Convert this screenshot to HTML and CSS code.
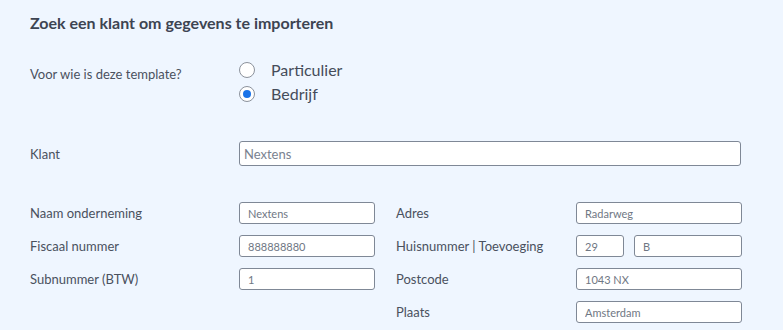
FILE: index.html
```html
<!DOCTYPE html>
<html lang="nl">
<head>
<meta charset="utf-8">
<title>Zoek een klant</title>
<link rel="stylesheet" href="styles.css">
</head>
<body>
<main class="page">
  <h1 class="title">Zoek een klant om gegevens te importeren</h1>

  <section class="row-type">
    <div class="label">Voor wie is deze template?</div>
    <div class="radios">
      <label class="radio"><input type="radio" name="type"><span>Particulier</span></label>
      <label class="radio"><input type="radio" name="type" checked><span>Bedrijf</span></label>
    </div>
  </section>

  <section class="row-klant">
    <div class="label">Klant</div>
    <input class="field field-lg" type="text" value="Nextens">
  </section>

  <section class="details">
    <div class="label">Naam onderneming</div>
    <input class="field" type="text" value="Nextens">
    <div class="label">Adres</div>
    <input class="field" type="text" value="Radarweg">

    <div class="label">Fiscaal nummer</div>
    <input class="field" type="text" value="888888880">
    <div class="label">Huisnummer | Toevoeging</div>
    <div class="pair">
      <input class="field" type="text" value="29">
      <input class="field" type="text" value="B">
    </div>

    <div class="label">Subnummer (BTW)</div>
    <input class="field" type="text" value="1">
    <div class="label">Postcode</div>
    <input class="field" type="text" value="1043 NX">

    <div></div>
    <div></div>
    <div class="label">Plaats</div>
    <input class="field" type="text" value="Amsterdam">
  </section>
</main>
</body>
</html>
```

FILE: styles.css
```css
html, body {
  margin: 0;
  padding: 0;
  background: #eff6ff;
}
body {
  font-family: Lato, "Open Sans", sans-serif;
  color: #474e5c;
}
.page {
  padding: 14px 0 0 30px;
}
.title {
  margin: 0;
  font-size: 16px;
  font-weight: 700;
  line-height: 18px;
  color: #3d4452;
}
.label {
  font-size: 13px;
  line-height: 16px;
  color: #4a515e;
}
.row-type {
  display: grid;
  grid-template-columns: 209px auto;
  margin-top: 28px;
}
.row-type > .label {
  padding-top: 6px;
}
.radios {
  display: flex;
  flex-direction: column;
  gap: 5px;
}
.radio {
  display: flex;
  align-items: center;
  gap: 16px;
  font-size: 16px;
  line-height: 19px;
  color: #454c5a;
}
.radio input {
  appearance: none;
  -webkit-appearance: none;
  margin: 0;
  width: 16px;
  height: 16px;
  border: 1px solid #8c929c;
  border-radius: 50%;
  background: #fff;
  box-sizing: border-box;
  position: relative;
}
.radio input:checked::after {
  content: "";
  position: absolute;
  left: 3px;
  top: 3px;
  width: 8px;
  height: 8px;
  border-radius: 50%;
  background: #1a73e8;
}
.row-klant {
  display: grid;
  grid-template-columns: 209px 502px;
  align-items: center;
  margin-top: 38px;
}
.field {
  box-sizing: border-box;
  height: 22px;
  width: 100%;
  margin: 0;
  padding: 0 8px;
  border: 1px solid #7f8896;
  border-radius: 3px;
  background: #fff;
  font-family: Lato, "Open Sans", sans-serif;
  font-size: 11px;
  color: #6f7784;
  outline: none;
}
.field-lg {
  height: 25px;
  padding: 0 4px;
  font-size: 13px;
  color: #7a8290;
}
.details {
  display: grid;
  grid-template-columns: 209px 136px 21px 180px 166px;
  grid-auto-rows: 22px;
  row-gap: 11px;
  align-items: center;
  margin-top: 36px;
}
.details > *:nth-child(4n+1) { grid-column: 1; }
.details > *:nth-child(4n+2) { grid-column: 2; }
.details > *:nth-child(4n+3) { grid-column: 4; }
.details > *:nth-child(4n+4) { grid-column: 5; }
.pair {
  display: grid;
  grid-template-columns: 48px 1fr;
  gap: 10px;
}
```
